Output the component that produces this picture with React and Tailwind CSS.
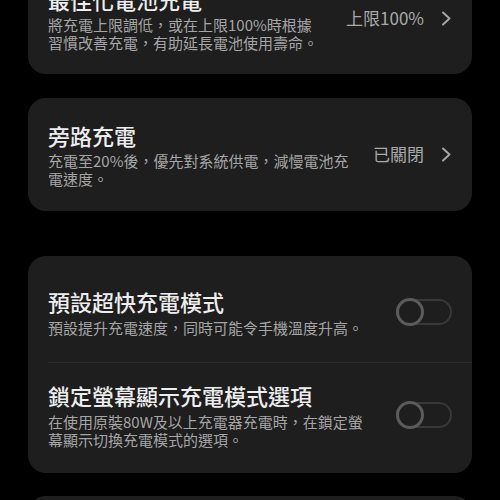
const font = { fontFamily: '"Noto Sans CJK TC", "Noto Sans", sans-serif' };

const Chevron = () => (
  <svg width="11" height="15" viewBox="0 0 11 15" fill="none" className="ml-[17px] shrink-0">
    <path d="M2 1.5 L8.5 7.5 L2 13.5" stroke="#a6a6a6" strokeWidth="2" strokeLinecap="round" strokeLinejoin="round" />
  </svg>
);

const Toggle = () => (
  <div className="relative w-[56px] h-[28px] shrink-0">
    <div className="absolute left-0 right-0 top-[1px] bottom-[1px] rounded-full border-2 border-[#383838]" />
    <div className="absolute left-0 top-0 w-[28px] h-[28px] rounded-full border-[3px] border-[#5b5b5b] bg-[#1e1e1e]" />
  </div>
);

const LinkCard = ({ title, desc, value, className }) => (
  <div className={`bg-[#1e1e1e] rounded-[18px] flex items-center pl-5 pr-5 pt-[22px] pb-[22px] ${className}`}>
    <div className="flex-1 min-w-0 pr-5">
      <div className="text-[22px] leading-[30px] font-medium text-[#ededed]">{title}</div>
      <div className="text-[15px] leading-[18px] text-[#a5a5a5] mt-[2px]">{desc}</div>
    </div>
    <div className="text-[17px] text-[#a9a9a9] whitespace-nowrap">{value}</div>
    <Chevron />
  </div>
);

const ToggleRow = ({ title, desc, className }) => (
  <div className={`flex items-center pl-5 pr-5 ${className}`}>
    <div className="flex-1 min-w-0 pr-7">
      <div className="text-[22px] leading-[30px] font-medium text-[#ededed]">{title}</div>
      <div className="text-[15px] leading-[18px] text-[#a5a5a5] mt-[3px]">{desc}</div>
    </div>
    <Toggle />
  </div>
);

export default function App() {
  return (
    <div className="w-[500px] h-[500px] bg-black overflow-hidden px-[28px]" style={font}>
      <div className="flex flex-col -mt-[38px]">
        <LinkCard
          title="最佳化電池充電"
          desc="將充電上限調低，或在上限100%時根據習慣改善充電，有助延長電池使用壽命。"
          value="上限100%"
        />
        <LinkCard
          className="mt-[24px] pb-[23px]"
          title="旁路充電"
          desc="充電至20%後，優先對系統供電，減慢電池充電速度。"
          value="已關閉"
        />
        <div className="mt-[45px] bg-[#1e1e1e] rounded-[18px]">
          <ToggleRow
            className="pt-[30px] pb-[25px]"
            title="預設超快充電模式"
            desc="預設提升充電速度，同時可能令手機溫度升高。"
          />
          <div className="ml-5 h-px bg-[#2b2b2b]" />
          <ToggleRow
            className="pt-[17px] pb-[24px]"
            title="鎖定螢幕顯示充電模式選項"
            desc="在使用原裝80W及以上充電器充電時，在鎖定螢幕顯示切換充電模式的選項。"
          />
        </div>
        <div className="mt-[23px] bg-[#1e1e1e] rounded-[18px] h-[80px]" />
      </div>
    </div>
  );
}
